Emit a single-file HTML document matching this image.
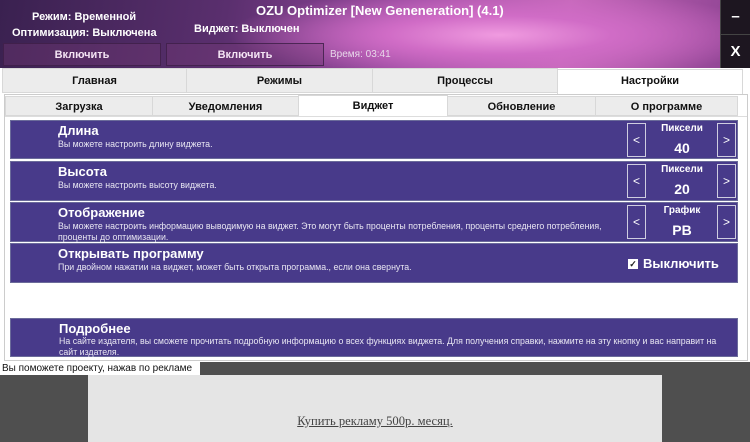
<!DOCTYPE html><html><head><meta charset="utf-8"><style>
*{margin:0;padding:0;box-sizing:border-box}
body{width:750px;height:442px;overflow:hidden;position:relative;font-family:"Liberation Sans",sans-serif;background:#fff}
.a{position:absolute}
#hdr{left:0;top:0;width:750px;height:68px;background:radial-gradient(ellipse 320px 55px at 500px 35px,#f09be0 0%,#d06cc6 35%,transparent 85%),linear-gradient(100deg,#3a2150 0%,#5a2f6e 30%,#9a4aa0 55%,#c468b8 75%,#8a4090 100%)}
.ht{color:#fff;font-size:11px;font-weight:bold;white-space:nowrap}
.hb{border:1px solid rgba(60,30,70,.8);background:rgba(120,60,120,.35);color:#f4e4f4;font-size:11px;font-weight:bold;text-align:center;line-height:22px}
.wb{left:720px;width:30px;height:34px;background:#1d1620;color:#fff;font-weight:bold;font-size:15px;text-align:center;line-height:34px;border-left:1px solid #444}
.tab{top:68px;height:25px;background:#ececec;border:1px solid #d8d8d8;font-size:11px;font-weight:bold;text-align:center;line-height:25px;color:#111}
.st{top:96px;height:20px;background:#ececec;border:1px solid #d8d8d8;font-size:11px;font-weight:bold;text-align:center;line-height:20px;color:#111}
.row{left:10px;width:728px;background:#483a8a;border:1px solid #6b6b9a}
.row b{position:absolute;left:47px;top:2px;color:#fff;font-size:13px}
.row span{position:absolute;left:47px;top:18px;color:#e8e6f2;font-size:8.8px;line-height:11px;width:560px}
.btn{width:19px;height:34px;border:1px solid #cfcde0;color:#fff;font-size:12px;text-align:center;line-height:32px}
.lb{width:60px;text-align:center;color:#fff;font-weight:bold}
</style></head><body>
<div id="hdr" class="a"></div>
<div class="a ht" style="left:32px;top:11px">Режим: Временной</div>
<div class="a ht" style="left:12px;top:27px">Оптимизация: Выключена</div>
<div class="a ht" style="left:194px;top:23px">Виджет: Выключен</div>
<div class="a ht" style="left:256px;top:3px;font-size:13px">OZU Optimizer [New Geneneration] (4.1)</div>
<div class="a hb" style="left:3px;top:43px;width:158px;height:23px">Включить</div>
<div class="a hb" style="left:166px;top:43px;width:158px;height:23px">Включить</div>
<div class="a" style="left:330px;top:49px;color:#e8d8ea;font-size:10px">Время: 03:41</div>
<div class="a wb" style="top:0">–</div>
<div class="a wb" style="top:34px;border-top:1px solid #444">X</div>
<div class="a" style="left:0;top:68px;width:750px;height:294px;background:#fff"></div>
<div class="a tab" style="left:2px;width:185px">Главная</div>
<div class="a tab" style="left:186px;width:187px">Режимы</div>
<div class="a tab" style="left:372px;width:186px">Процессы</div>
<div class="a tab" style="left:557px;width:186px;background:#fff;border-bottom:none;top:69px;line-height:23px">Настройки</div>
<div class="a" style="left:4px;top:94px;width:744px;height:267px;border:1px solid #ccc"></div>
<div class="a st" style="left:5px;width:148px">Загрузка</div>
<div class="a st" style="left:152px;width:147px">Уведомления</div>
<div class="a st" style="left:298px;width:150px;background:#fff;border-bottom:none;top:95px;height:21px">Виджет</div>
<div class="a st" style="left:447px;width:149px">Обновление</div>
<div class="a st" style="left:595px;width:143px">О программе</div>
<div class="a" style="left:5px;top:116px;width:742px;height:244px;border-top:1px solid #ddd"></div>

<div class="a row" style="top:120px;height:39px"><b>Длина</b><span>Вы можете настроить длину виджета.</span></div>
<div class="a row" style="top:161px;height:40px"><b>Высота</b><span>Вы можете настроить высоту виджета.</span></div>
<div class="a row" style="top:202px;height:40px"><b>Отображение</b><span style="width:560px">Вы можете настроить информацию выводимую на виджет. Это могут быть проценты потребления, проценты среднего потребления, проценты до оптимизации.</span></div>
<div class="a row" style="top:243px;height:40px"><b style="top:2px">Открывать программу</b><span>При двойном нажатии на виджет, может быть открыта программа., если она свернута.</span></div>

<div class="a btn" style="left:627px;top:123px">&lt;</div><div class="a btn" style="left:717px;top:123px">&gt;</div>
<div class="a lb" style="left:652px;top:123px;font-size:10px">Пиксели</div><div class="a lb" style="left:652px;top:140px;font-size:14px">40</div>
<div class="a btn" style="left:627px;top:164px">&lt;</div><div class="a btn" style="left:717px;top:164px">&gt;</div>
<div class="a lb" style="left:652px;top:164px;font-size:10px">Пиксели</div><div class="a lb" style="left:652px;top:181px;font-size:14px">20</div>
<div class="a btn" style="left:627px;top:205px">&lt;</div><div class="a btn" style="left:717px;top:205px">&gt;</div>
<div class="a lb" style="left:652px;top:205px;font-size:10px">График</div><div class="a lb" style="left:652px;top:222px;font-size:14px">PB</div>
<div class="a" style="left:628px;top:259px;width:10px;height:10px;background:#fff;color:#222;font-size:9px;line-height:10px;text-align:center;font-weight:bold">✓</div>
<div class="a" style="left:643px;top:256px;color:#fff;font-size:13px;font-weight:bold">Выключить</div>

<div class="a row" style="top:318px;height:39px;left:10px"><b style="left:48px;top:2px">Подробнее</b><span style="left:48px;top:17px;width:676px">На сайте издателя, вы сможете прочитать подробную информацию о всех функциях виджета. Для получения справки, нажмите на эту кнопку и вас направит на сайт издателя.</span></div>

<div class="a" style="left:0;top:362px;width:750px;height:80px;background:#4f4f4f"></div>
<div class="a" style="left:0;top:362px;width:200px;height:13px;background:#fff;font-size:10px;line-height:13px;padding-left:2px;color:#111">Вы поможете проекту, нажав по рекламе</div>
<div class="a" style="left:88px;top:375px;width:574px;height:67px;background:#e5e5e5"></div>
<div class="a" style="left:88px;top:414px;width:574px;text-align:center;font-family:'Liberation Serif',serif;font-size:12.6px;color:#444;text-decoration:underline">Купить рекламу 500р. месяц.</div>
</body></html>
